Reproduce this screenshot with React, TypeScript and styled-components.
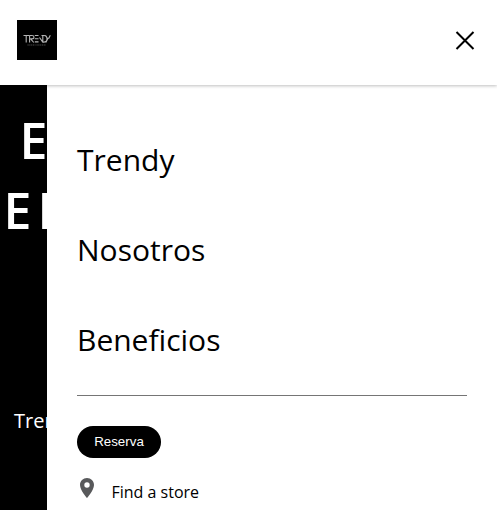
import React from "react";
import styled, { createGlobalStyle } from "styled-components";

const GlobalStyle = createGlobalStyle`
  * { box-sizing: border-box; }
  html, body { margin: 0; background: #fff; overflow: hidden; }
  body { font-family: "Open Sans", sans-serif; color: #000; }
`;

const Page = styled.div`
  width: 497px;
  height: 510px;
  display: flex;
  flex-direction: column;
  overflow: hidden;
`;

const Header = styled.header`
  position: relative;
  z-index: 1;
  flex: 0 0 85px;
  display: flex;
  align-items: flex-start;
  justify-content: space-between;
  padding: 20px 22px 0 17px;
  background: #fff;
  box-shadow: 0 1px 3px rgba(0, 0, 0, 0.25);
`;

const Logo = styled.svg`
  display: block;
  width: 40px;
  height: 40px;
`;

const CloseButton = styled.button`
  display: block;
  margin: 10px 0 0;
  padding: 0;
  border: 0;
  background: none;
  line-height: 0;
`;

const Body = styled.div`
  flex: 1;
  display: grid;
  grid-template-columns: 47px 450px;
  min-height: 0;
`;

const Hero = styled.section`
  overflow: hidden;
  background: #000;
  color: #fff;
  white-space: nowrap;
`;

const HeroLine = styled.div<{ $indent: number }>`
  padding-left: ${(p) => p.$indent}px;
  font-size: 50px;
  font-weight: 600;
  line-height: 70px;
  letter-spacing: 6px;
`;

const HeroTitle = styled.div`
  height: 318px;
  padding-top: 20px;
`;

const HeroText = styled.p`
  margin: 0;
  padding-left: 14px;
  font-size: 20px;
  line-height: 36px;
`;

const Drawer = styled.aside`
  padding: 30px 30px 0;
  background: #fff;
`;

const Nav = styled.nav`
  display: flex;
  flex-direction: column;
  height: 281px;
  border-bottom: 1px solid #757575;
`;

const NavLink = styled.a`
  flex: 0 0 90px;
  font-size: 30px;
  line-height: 90px;
`;

const ReserveButton = styled.button`
  display: block;
  width: 84px;
  height: 32px;
  margin: 30px 0 0;
  padding: 0;
  border: 0;
  border-radius: 16px;
  background: #000;
  color: #fff;
  font: 400 13.333px/30px "Liberation Sans", Arial, sans-serif;
`;

const StoreLink = styled.a`
  display: flex;
  align-items: flex-start;
  margin-top: 18px;
  font-size: 16px;
  line-height: 32px;
`;

const Pin = styled.svg`
  width: 24px;
  height: 24px;
  margin: 0 12.5px 0 -2px;
`;

const links = ["Trendy", "Nosotros", "Beneficios"];

export default function App() {
  return (
    <>
      <GlobalStyle />
      <Page>
        <Header>
          <Logo viewBox="0 0 40 40" aria-label="Trendy">
            <rect width="40" height="40" fill="#000" />
            <g fill="none" stroke="#b5b5b5" strokeWidth="1.1">
              <path d="M6.5 15.5H12M9.2 15.5V22.5M12.6 22.5v-7h2.4q2 0 2 1.7t-2 1.7h-1.4l3.2 3.6M17.8 15.5H21.5M17.8 18.7H21.5M17.8 21.9H21.5M22.5 17.5l3.3 4.6V15.2M24.5 15.5h2.5q3 0 3 3.3t-3 3.3h-1.2M28.5 15.2l1.7 3h1.6l1.5-3M31 18.2L28.8 22.5" strokeLinejoin="round" />
              <path d="M10.5 25h8M19.5 25h9.5" stroke="#4c4c4c" strokeDasharray="1.2 .6" />
            </g>
          </Logo>
          <CloseButton aria-label="Close">
            <svg width="20" height="20" viewBox="0 0 20 20">
              <path d="M1.5 2L18.5 19M18.5 2L1.5 19" stroke="#000" strokeWidth="2" />
            </svg>
          </CloseButton>
        </Header>
        <Body>
          <Hero>
            <HeroTitle>
              <HeroLine $indent={19.5}>EL</HeroLine>
              <HeroLine $indent={3.5}>EN</HeroLine>
            </HeroTitle>
            <HeroText>Trendy</HeroText>
          </Hero>
          <Drawer>
            <Nav>
              {links.map((label) => (
                <NavLink key={label}>{label}</NavLink>
              ))}
            </Nav>
            <ReserveButton>Reserva</ReserveButton>
            <StoreLink>
              <Pin viewBox="0 0 24 24">
                <path
                  fill="#58595b"
                  d="M12 2C8.13 2 5 5.13 5 9c0 5.25 7 13 7 13s7-7.75 7-13c0-3.87-3.13-7-7-7zm0 9.7a2.7 2.7 0 1 1 0-5.4 2.7 2.7 0 0 1 0 5.4z"
                />
              </Pin>
              Find a store
            </StoreLink>
          </Drawer>
        </Body>
      </Page>
    </>
  );
}
